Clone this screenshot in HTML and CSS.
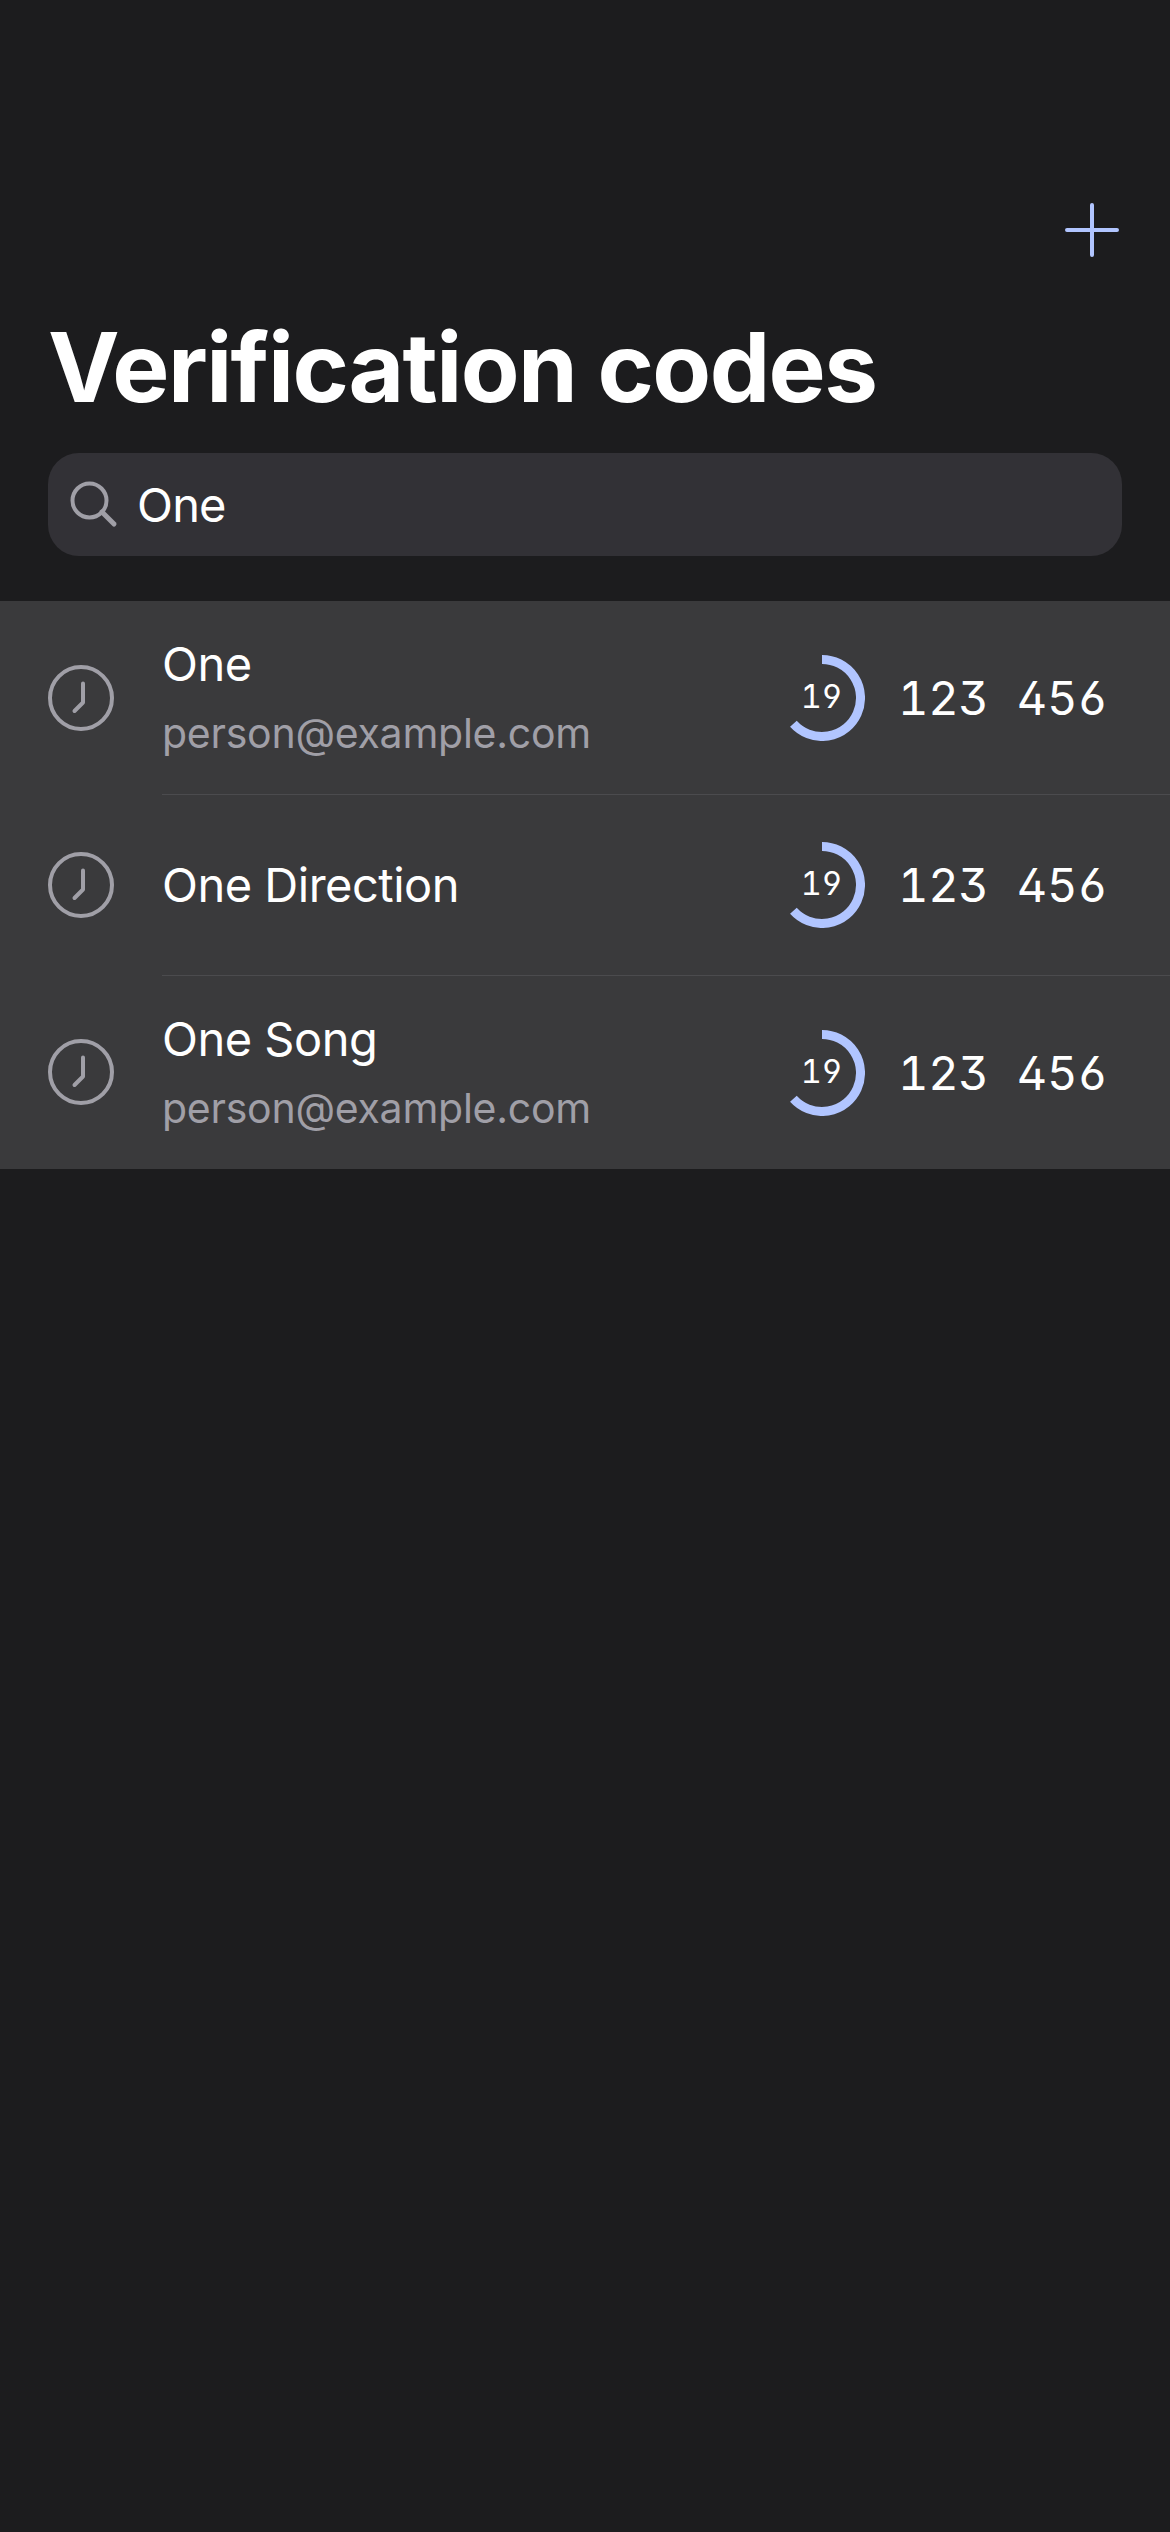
FILE: index.html
```html
<!DOCTYPE html>
<html lang="en">
<head>
<meta charset="utf-8">
<title>Verification codes</title>
<link rel="stylesheet" href="styles.css">
</head>
<body>
<header class="header">
  <button class="add" aria-label="Add">
    <svg width="54" height="54" viewBox="0 0 54 54"><path d="M27 2v50M2 27h50"/></svg>
  </button>
  <h1 class="title">Verification codes</h1>
  <div class="search">
    <svg class="search-icon" width="48" height="48" viewBox="0 0 48 48"><circle cx="19.5" cy="19.5" r="17"/><path d="M32 31l12 12" stroke-width="5"/></svg>
    <span class="query">One</span>
  </div>
</header>
<main class="list">
  <article class="row">
    <svg class="clock" width="66" height="66" viewBox="0 0 66 66"><circle cx="33" cy="33" r="31"/><path d="M35 18.500v19l-8.500 8.500"/></svg>
    <div class="body">
      <div class="labels"><div class="name">One</div><div class="email">person@example.com</div></div>
      <div class="timer"><svg width="86" height="86" viewBox="0 0 86 86"><path d="M43 4.500A38.500 38.500 0 1 1 14.400 68.760"/></svg><span class="seconds">19</span></div>
      <div class="code">123 456</div>
    </div>
  </article>
  <article class="row short">
    <svg class="clock" width="66" height="66" viewBox="0 0 66 66"><circle cx="33" cy="33" r="31"/><path d="M35 18.500v19l-8.500 8.500"/></svg>
    <div class="body">
      <div class="labels"><div class="name">One Direction</div></div>
      <div class="timer"><svg width="86" height="86" viewBox="0 0 86 86"><path d="M43 4.500A38.500 38.500 0 1 1 14.400 68.760"/></svg><span class="seconds">19</span></div>
      <div class="code">123 456</div>
    </div>
  </article>
  <article class="row last">
    <svg class="clock" width="66" height="66" viewBox="0 0 66 66"><circle cx="33" cy="33" r="31"/><path d="M35 18.500v19l-8.500 8.500"/></svg>
    <div class="body">
      <div class="labels"><div class="name">One Song</div><div class="email">person@example.com</div></div>
      <div class="timer"><svg width="86" height="86" viewBox="0 0 86 86"><path d="M43 4.500A38.500 38.500 0 1 1 14.400 68.760"/></svg><span class="seconds">19</span></div>
      <div class="code">123 456</div>
    </div>
  </article>
</main>
</body>
</html>
```
FILE: styles.css
```css
* { box-sizing: border-box; margin: 0; padding: 0; }

body {
  min-height: 2532px;
  background: #1c1c1e;
  color: #fff;
  font-family: Inter, sans-serif;
}

svg {
  display: block;
  flex: none;
  fill: none;
  stroke-linecap: round;
  stroke-linejoin: round;
}

.header {
  display: flex;
  flex-direction: column;
  height: 601px;
  padding: 203px 48px 0;
}

.add {
  align-self: flex-end;
  margin-right: 3.5px;
  border: 0;
  background: none;
}

.add svg { stroke: #b1c5ff; stroke-width: 4; }

.title {
  margin-top: 50px;
  font-size: 96px;
  font-weight: 700;
  line-height: 120px;
  letter-spacing: -1.55px;
  white-space: nowrap;
}

.search {
  display: flex;
  align-items: center;
  height: 103px;
  margin-top: 26px;
  padding-left: 22px;
  border-radius: 31px;
  background: #323136;
}

.search-icon { stroke: #a09fa7; stroke-width: 4; }

.query {
  margin-left: 19px;
  font-size: 47px;
  line-height: 60px;
  letter-spacing: -0.8px;
}

.list { background: #3a3a3c; }

.row {
  display: flex;
  align-items: center;
  height: 194px;
  padding-left: 48px;
}

.row.short { height: 181px; }
.row.last { height: 193px; }

.clock { stroke: #a09fa7; stroke-width: 4; }

.short .clock,
.last .clock { margin-bottom: 1px; }

.body {
  display: flex;
  flex: 1;
  align-items: center;
  height: 100%;
  margin-left: 48px;
  padding-right: 63px;
  border-bottom: 1px solid #4b4b4e;
}

.last .body { border-bottom: 0; }

.labels {
  display: flex;
  flex: 1;
  flex-direction: column;
  gap: 12px;
  margin-bottom: 1px;
}

.short .labels { margin-bottom: 0; }

.name {
  font-size: 47px;
  line-height: 60px;
  letter-spacing: -0.5px;
}

.email {
  color: #a09fa7;
  font-size: 41px;
  line-height: 54px;
  letter-spacing: -0.25px;
}

.timer {
  display: grid;
  place-items: center;
  margin: 1px 33.5px 0 0;
}

.timer > * { grid-area: 1 / 1; }

.timer svg {
  stroke: #b1c5ff;
  stroke-linecap: butt;
  stroke-width: 9;
}

.seconds,
.code {
  font-feature-settings: "tnum", "ss01";
  white-space: nowrap;
}

.seconds {
  margin-bottom: 2px;
  font-size: 32.5px;
  line-height: 40px;
  letter-spacing: -0.3px;
}

.code {
  width: 209px;
  margin-top: 1px;
  font-size: 47px;
  line-height: 60px;
  letter-spacing: -0.3px;
  word-spacing: 16px;
}

.short .timer,
.short .code { margin-top: 0; }
```
